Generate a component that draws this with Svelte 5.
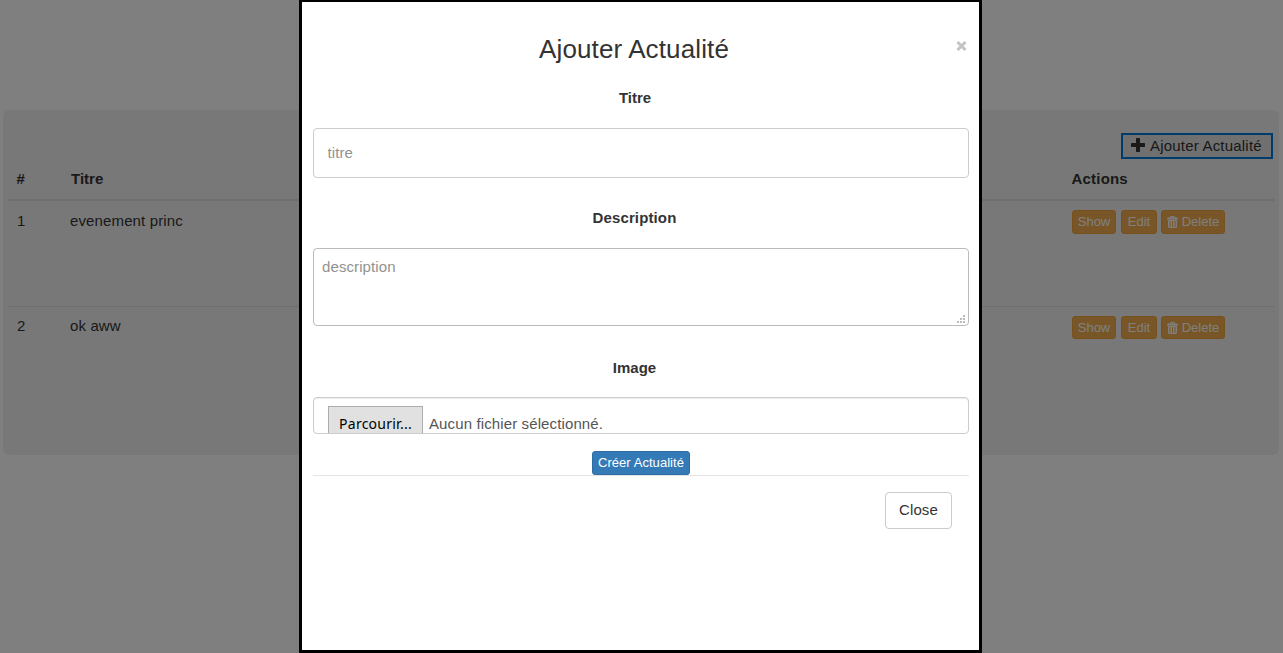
<script>
  const rows = [
    { id: 1, titre: 'evenement princ' },
    { id: 2, titre: 'ok aww' }
  ];
</script>

<div class="page">
  <main class="panel">
    <div class="toolbar">
      <button class="add">
        <svg width="14" height="14" viewBox="0 0 14 14"><path d="M5.5 0h3l.5.5V5h4.5l.5.5v3l-.5.5H9v4.5l-.5.5h-3l-.5-.5V9H.5L0 8.500v-3L.5 5H5V.5z" /></svg>
        <span>Ajouter Actualité</span>
      </button>
    </div>
    <div class="row head">
      <b class="num">#</b><b class="name">Titre</b><b class="actions">Actions</b>
    </div>
    {#each rows as row, i}
      <div class="row body" class:last={i === rows.length - 1}>
        <span class="num">{row.id}</span>
        <span class="name">{row.titre}</span>
        <div class="actions">
          <button class="warn show">Show</button>
          <button class="warn edit">Edit</button>
          <button class="warn delete">
            <svg width="11" height="12" viewBox="0 0 11 12">
              <path fill-rule="evenodd" d="M4 0h3l1 1v.5h2l1 1v1H0v-1l1-1h2V1zM4 1v.5h3V1zM1 4h9v7l-1 1H2l-1-1zM2.500 5v6h1V5zM5 5v6h1V5zM7.500 5v6h1V5z" />
            </svg>
            <span>Delete</span>
          </button>
        </div>
      </div>
    {/each}
  </main>
</div>

<div class="backdrop">
  <section class="modal">
    <header>
      <h2>Ajouter Actualité</h2>
      <button class="x" aria-label="Close">
        <svg width="11" height="10" viewBox="0 0 11 10"><path d="M1.500 1l8 8M9.500 1l-8 8" /></svg>
      </button>
    </header>
    <label for="titre">Titre</label>
    <input id="titre" class="field" placeholder="titre" />
    <label for="description" class="l2">Description</label>
    <div class="area">
      <textarea id="description" placeholder="description"></textarea>
      <svg class="grip" width="8" height="8" viewBox="0 0 8 8"><path d="M6 0h2v2H6zM3 3h2v2H3zM6 3h2v2H6zM0 6h2v2H0zM3 6h2v2H3zM6 6h2v2H6z" /></svg>
    </div>
    <span class="label l3">Image</span>
    <div class="file">
      <button class="browse">Parcourir...</button>
      <span>Aucun fichier sélectionné.</span>
    </div>
    <div class="submit"><button class="primary">Créer Actualité</button></div>
    <footer><button class="close">Close</button></footer>
  </section>
</div>

<style>
  :global(body) {
    background: #fff;
    font-family: "Liberation Sans", Arial, sans-serif;
    font-size: 15px;
    line-height: 21px;
    color: #333;
    overflow: hidden;
  }
  button, input, textarea {
    font: inherit;
    color: inherit;
    box-sizing: border-box;
    margin: 0;
  }
  svg { display: block; flex: none; }
  .page { height: 653px; box-sizing: border-box; padding: 110px 4px 0 3px; }
  .panel {
    height: 345px;
    box-sizing: border-box;
    padding: 23px 5px 0;
    border-radius: 6px;
    background: #f1f1f1;
  }
  .toolbar { display: flex; justify-content: flex-end; padding-right: 1px; }
  .add {
    display: flex;
    align-items: center;
    width: 152px;
    height: 26px;
    padding: 0 0 2px 8px;
    gap: 5px;
    border: 2px solid #0078d7;
    background: #e1e1e1;
    letter-spacing: 0.2px;
    white-space: nowrap;
  }
  .add svg { fill: #333; }
  .row { display: grid; grid-template-columns: 54px 1fr 203px; box-sizing: border-box; }
  .head { height: 42px; padding-top: 9px; border-bottom: 2px solid #ddd; }
  .head .num { padding-left: 8.500px; }
  .head .name { padding-left: 9px; }
  .num { padding-left: 9px; }
  .name { padding-left: 8px; letter-spacing: 0.13px; }
  .head .name { letter-spacing: 0; }
  .head .actions { padding-left: 0.500px; letter-spacing: 0.2px; }
  .body { height: 105px; padding-top: 9px; }
  .last { height: 106px; border-top: 1px solid #ddd; }
  .last .num, .last .name { margin-top: -1px; }
  .body .actions { display: flex; align-items: flex-start; padding-left: 1px; }
  .warn {
    display: flex;
    align-items: center;
    justify-content: center;
    height: 24px;
    padding: 0;
    border: 1px solid #eea236;
    border-radius: 3px;
    background: #f0ad4e;
    color: #fff;
    font-size: 13px;
    line-height: 20px;
  }
  .last .warn { height: 23px; }
  .warn svg { fill: #fff; }
  .show { width: 44px; margin-right: 5px; }
  .edit { width: 36px; margin-right: 4px; }
  .delete { width: 64px; gap: 4px; }
  .backdrop {
    position: fixed;
    inset: 0;
    display: flex;
    padding-left: 299px;
    background: rgba(0, 0, 0, 0.5);
  }
  .modal {
    display: flex;
    flex-direction: column;
    width: 683px;
    height: 653px;
    box-sizing: border-box;
    border: solid #000;
    border-width: 2px 3px 3px;
    padding: 0 10px 0 11px;
    background: #fff;
  }
  header {
    display: grid;
    grid-template-columns: 30px 1fr 30px;
    height: 85px;
    padding-top: 31px;
    box-sizing: border-box;
  }
  h2 {
    grid-column: 2;
    margin: 0;
    padding-right: 14px;
    font-size: 26px;
    line-height: 32px;
    font-weight: 400;
    letter-spacing: 0.12px;
    text-align: center;
    white-space: nowrap;
  }
  .x { display: flex; padding: 8px 0 0 17px; border: 0; background: none; height: 18px; }
  .x svg { stroke: #c4c4c4; stroke-width: 3; fill: none; }
  label, .label {
    display: block;
    height: 41px;
    padding-right: 12px;
    box-sizing: border-box;
    font-weight: 700;
    text-align: center;
  }
  .field {
    height: 50px;
    padding: 0 13px 2px 13.500px;
    border: 1px solid #ccc;
    border-radius: 4px;
    outline: 0;
    background: #fff;
    letter-spacing: 0.1px;
  }
  .l2 { height: 70px; padding-top: 29px; padding-right: 13px; letter-spacing: 0.12px; }
  .area { position: relative; height: 78px; }
  textarea {
    display: block;
    width: 100%;
    height: 78px;
    padding: 7px 8px;
    border: 1px solid #bbb;
    border-radius: 4px;
    resize: none;
    background: #fff;
    outline: 0;
    letter-spacing: 0.1px;
  }
  ::placeholder { color: #919191; opacity: 1; }
  .grip { position: absolute; right: 4px; bottom: 3px; fill: #bbb; }
  .l3 { height: 71px; padding-top: 31px; padding-right: 13px; }
  .file {
    display: flex;
    height: 37px;
    box-sizing: border-box;
    padding: 8px 0 0 14px;
    border: 1px solid #ccc;
    border-radius: 4px;
    box-shadow: inset 0 1px 1px rgba(0, 0, 0, 0.075);
    overflow: hidden;
    color: #555;
  }
  .file span { padding: 7px 0 0 6px; letter-spacing: 0.12px; }
  .browse {
    width: 95px;
    height: 36px;
    flex: none;
    padding: 0 0 2px;
    border: 1px solid #adadad;
    background: #e1e1e1;
    color: #000;
    font-family: "Noto Sans", sans-serif;
    font-size: 14px;
    letter-spacing: 0.25px;
  }
  .submit { display: flex; justify-content: center; height: 41px; padding-top: 17px; box-sizing: border-box; }
  .primary {
    width: 98px;
    height: 24px;
    padding: 0;
    border: 1px solid #2e6da4;
    border-radius: 3px;
    background: #337ab7;
    color: #fff;
    font-size: 13px;
    line-height: 20px;
    letter-spacing: 0.05px;
    white-space: nowrap;
  }
  footer { display: flex; justify-content: flex-end; padding: 16px 17px 0 0; border-top: 1px solid #e5e5e5; }
  .close { width: 67px; height: 37px; padding: 0 0 2px; border: 1px solid #ccc; border-radius: 4px; background: #fff; letter-spacing: 0.1px; }
</style>
